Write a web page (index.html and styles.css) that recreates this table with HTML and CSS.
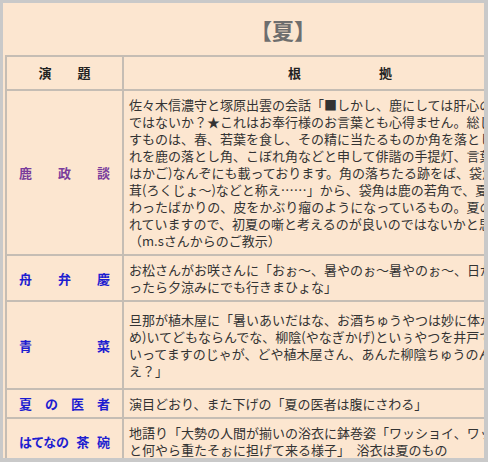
FILE: index.html
```html
<!DOCTYPE html>
<html lang="ja">
<head>
<meta charset="utf-8">
<title>夏</title>
<link rel="stylesheet" href="styles.css">
</head>
<body>
<div class="frame">
  <div class="page">
    <h1 class="title">【夏】</h1>
    <table class="list">
      <colgroup><col class="col-name"><col class="col-basis"></colgroup>
      <thead>
        <tr>
          <th class="head-name">演　　題</th>
          <th class="head-basis">根　　　　　　拠</th>
        </tr>
      </thead>
      <tbody>
        <tr>
          <td class="name"><a class="lbl visited" href="#"><span>鹿</span><span>政</span><span>談</span></a></td>
          <td class="basis">佐々木信濃守と塚原出雲の会話「■しかし、鹿にしては肝心の角がない<br>ではないか？★これはお奉行様のお言葉とも心得ません。総じて鹿と申<br>すものは、春、若葉を食し、その精に当たるものか角を落としまする。こ<br>れを鹿の落とし角、こぼれ角などと申して俳諧の手提灯、言葉の栞(しお<br>はかご)なんぞにも載っております。角の落ちたる跡をば、袋角または鹿<br>茸(ろくじょ～)などと称え……」から、袋角は鹿の若角で、夏に生え変<br>わったばかりの、皮をかぶり瘤のようになっているもの。夏の季語とさ<br>れていますので、初夏の噺と考えるのが良いのではないかと思います。<br>（m.sさんからのご教示）</td>
        </tr>
        <tr>
          <td class="name"><a class="lbl" href="#"><span>舟</span><span>弁</span><span>慶</span></a></td>
          <td class="basis">お松さんがお咲さんに「おぉ～、暑やのぉ～暑やのぉ～、日が暮れたら<br>ったら夕涼みにでも行きまひょな」</td>
        </tr>
        <tr class="roomy">
          <td class="name"><a class="lbl" href="#"><span>青</span><span>菜</span></a></td>
          <td class="basis">旦那が植木屋に「暑いあいだはな、お酒ちゅうやつは妙に体が火照（ほ<br>め)いてどもならんでな、柳陰(やなぎかげ)といぅやつを井戸で冷やしてもら<br>いってますのじゃが、どや植木屋さん、あんた柳陰ちゅうのんを飲みなは<br>え？」</td>
        </tr>
        <tr>
          <td class="name"><a class="lbl" href="#"><span>夏</span><span>の</span><span>医</span><span>者</span></a></td>
          <td class="basis">演目どおり、また下げの「夏の医者は腹にさわる」</td>
        </tr>
        <tr>
          <td class="name"><a class="lbl" href="#"><span class="kana">はてなの</span><span>茶</span><span>碗</span></a></td>
          <td class="basis">地語り「大勢の人間が揃いの浴衣に鉢巻姿「ワッショイ、ワッショイ」<br>と何やら重たそぉに担げて来る様子」　浴衣は夏のもの</td>
        </tr>
      </tbody>
    </table>
  </div>
</div>
</body>
</html>
```

FILE: styles.css
```css
html, body {
  margin: 0;
  padding: 0;
  background: #c8c8c8;
}

body {
  font-family: "Noto Sans CJK JP", sans-serif;
}

.frame {
  width: 488px;
  height: 462px;
  box-sizing: border-box;
  border-style: solid;
  border-color: #c9c9c9;
  border-width: 3px 4px 4px 3px;
  background: #fce6d0;
  overflow: hidden;
}

.page {
  width: 556px;
  padding-left: 2px;
}

.title {
  margin: 0;
  height: 52px;
  display: flex;
  align-items: center;
  justify-content: center;
  font-size: 22px;
  font-weight: bold;
  color: #6e6e6e;
  line-height: 1;
}

.list {
  border-collapse: collapse;
  table-layout: fixed;
  width: 553px;
  font-size: 13px;
  line-height: 17px;
  color: #333;
}

.col-name {
  width: 117px;
}

.list th,
.list td {
  border: 2px solid #c5bdb4;
}

.list th {
  padding: 7px 5px 8px;
  font-weight: bold;
  color: #222;
  text-align: center;
  white-space: pre;
}

.list td {
  padding: 5px 5px;
}

.list .roomy td {
  padding-top: 9px;
  padding-bottom: 9px;
}

.name {
  vertical-align: middle;
}

.basis {
  white-space: nowrap;
  overflow: hidden;
}

.lbl {
  display: flex;
  justify-content: space-between;
  width: 91px;
  margin: 0 auto;
  font-weight: bold;
  color: #1d1dd0;
  text-decoration: none;
}

.lbl.visited {
  color: #7a3d9c;
}

.kana {
  font-feature-settings: "palt";
}
```
